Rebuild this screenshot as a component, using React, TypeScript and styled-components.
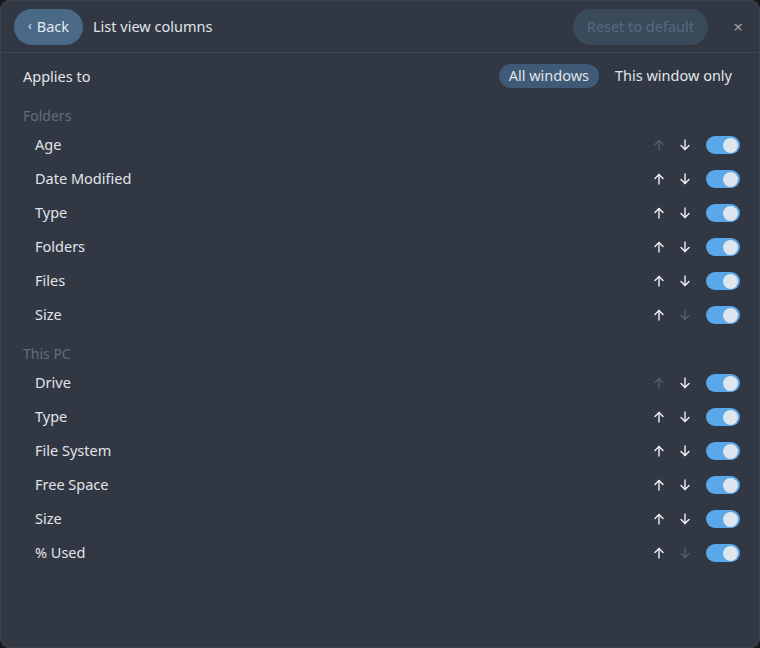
import { createGlobalStyle } from 'styled-components';
import styled from 'styled-components';

const GlobalStyle = createGlobalStyle`
  html, body {
    margin: 0;
    padding: 0;
    background: #14161a;
  }
  body {
    font-family: 'Noto Sans', 'Open Sans', sans-serif;
    color: #e0e4e9;
  }
`;

const Panel = styled.div`
  width: 760px;
  height: 648px;
  box-sizing: border-box;
  background: #323843;
  border: 1px solid #3c424d;
  border-radius: 9px;
  overflow: hidden;
`;

const Header = styled.div`
  height: 52px;
  box-sizing: border-box;
  display: flex;
  align-items: center;
  padding: 0 13px 0 13px;
  border-bottom: 1px solid #3e4550;
`;

const PillButton = styled.button<{ $muted?: boolean }>`
  height: 36px;
  border: none;
  border-radius: 18px;
  padding: 0 14px 2px;
  font-family: inherit;
  font-size: 14.5px;
  background: ${p => (p.$muted ? '#3a4a5b' : '#4a6986')};
  color: ${p => (p.$muted ? '#58697b' : '#e3e9f0')};
  cursor: pointer;
  display: flex;
  align-items: center;
  gap: 5px;
`;

const Chevron = styled.span`
  font-size: 12px;
  margin-top: -1px;
`;

const Title = styled.div`
  margin-left: 10px;
  padding-bottom: 2px;
  font-size: 14.5px;
  flex: 1;
`;

const Close = styled.button`
  margin-left: 22px;
  border: none;
  background: none;
  color: #98a1ab;
  font-size: 17px;
  padding: 0;
  width: 16px;
  cursor: pointer;
  font-family: inherit;
`;

const Body = styled.div`
  padding: 0 19px 0 22px;
`;

const AppliesRow = styled.div`
  height: 48px;
  padding-bottom: 2px;
  box-sizing: border-box;
  display: flex;
  align-items: center;
  font-size: 14.5px;
`;

const Scope = styled.div`
  margin-left: auto;
  margin-right: -2px;
  display: flex;
  align-items: center;
  gap: 6px;
`;

const ScopeOption = styled.div<{ $active?: boolean }>`
  height: 24px;
  line-height: 23px;
  padding: 0 10px;
  border-radius: 12px;
  background: ${p => (p.$active ? '#3f5a76' : 'transparent')};
  color: #e0e4e9;
`;

const SectionLabel = styled.div<{ $first?: boolean }>`
  height: 20px;
  line-height: 20px;
  margin-top: ${p => (p.$first ? '5px' : '12px')};
  font-size: 14px;
  color: #636c7a;
  margin-bottom: 2px;
`;

const Row = styled.div`
  height: 34px;
  display: flex;
  align-items: center;
  padding-left: 12px;
  font-size: 14.5px;
`;

const RowLabel = styled.div`
  flex: 1;
  padding-bottom: 2px;
`;

const ArrowButton = styled.button<{ $disabled?: boolean }>`
  width: 20px;
  height: 20px;
  padding: 0;
  border: none;
  background: none;
  display: flex;
  align-items: center;
  justify-content: center;
  color: ${p => (p.$disabled ? '#555d69' : '#f0f3f6')};
  margin-right: 6px;
  cursor: pointer;
`;

const Toggle = styled.div<{ $on: boolean }>`
  margin-left: 5px;
  width: 34px;
  height: 18px;
  border-radius: 9px;
  background: ${p => (p.$on ? '#5aa8ea' : '#4a515c')};
  display: flex;
  align-items: center;
  justify-content: ${p => (p.$on ? 'flex-end' : 'flex-start')};
  padding: 0 2px;
  box-sizing: border-box;
`;

const Knob = styled.div`
  width: 15px;
  height: 15px;
  border-radius: 50%;
  background: #dfe5ec;
`;

const Arrow = ({ dir }: { dir: 'up' | 'down' }) => (
  <svg width="12" height="12" viewBox="0 0 12 12" fill="none" stroke="currentColor" strokeWidth="1.4" strokeLinecap="round" strokeLinejoin="round">
    {dir === 'up' ? (
      <>
        <path d="M6 11V1.5" />
        <path d="M2 5.5L6 1.5L10 5.5" />
      </>
    ) : (
      <>
        <path d="M6 1V10.5" />
        <path d="M2 6.5L6 10.5L10 6.5" />
      </>
    )}
  </svg>
);

const sections = [
  { title: 'Folders', items: ['Age', 'Date Modified', 'Type', 'Folders', 'Files', 'Size'] },
  { title: 'This PC', items: ['Drive', 'Type', 'File System', 'Free Space', 'Size', '% Used'] },
];

const App = () => (
  <>
    <GlobalStyle />
    <Panel>
      <Header>
        <PillButton>
          <Chevron>‹</Chevron>Back
        </PillButton>
        <Title>List view columns</Title>
        <PillButton $muted>Reset to default</PillButton>
        <Close>×</Close>
      </Header>
      <Body>
        <AppliesRow>
          Applies to
          <Scope>
            <ScopeOption $active>All windows</ScopeOption>
            <ScopeOption>This window only</ScopeOption>
          </Scope>
        </AppliesRow>
        {sections.map((s, si) => (
          <div key={s.title}>
            <SectionLabel $first={si === 0}>{s.title}</SectionLabel>
            {s.items.map((item, i) => (
              <Row key={item + i}>
                <RowLabel>{item}</RowLabel>
                <ArrowButton $disabled={i === 0}>
                  <Arrow dir="up" />
                </ArrowButton>
                <ArrowButton $disabled={i === s.items.length - 1}>
                  <Arrow dir="down" />
                </ArrowButton>
                <Toggle $on>
                  <Knob />
                </Toggle>
              </Row>
            ))}
          </div>
        ))}
      </Body>
    </Panel>
  </>
);

export default App;
